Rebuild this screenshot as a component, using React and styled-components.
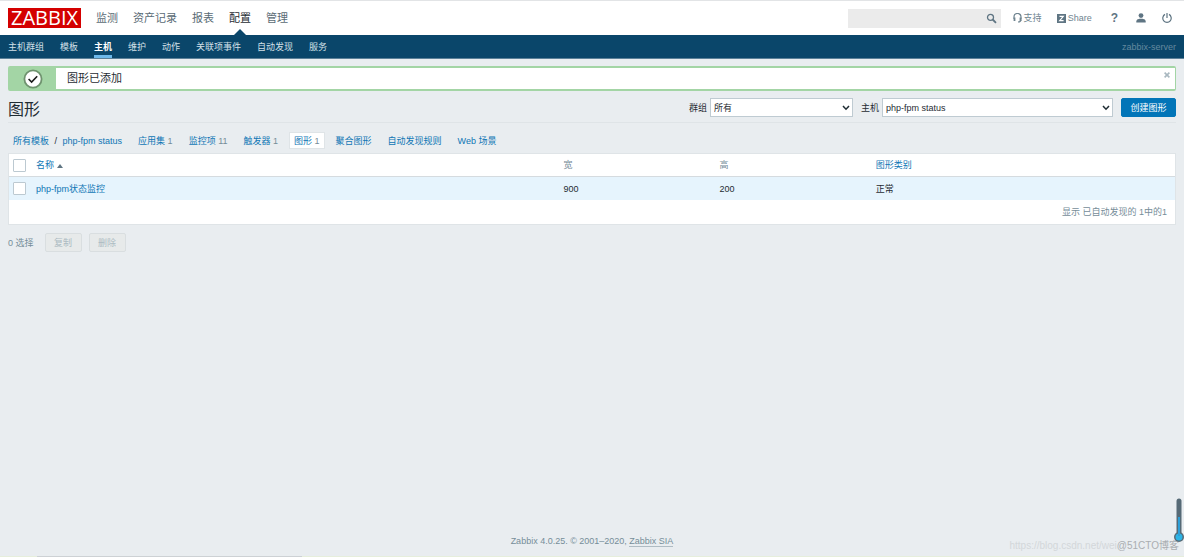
import React from 'react';
import styled, { createGlobalStyle } from 'styled-components';

const GlobalStyle = createGlobalStyle`
    * {
        box-sizing: border-box;
    }

    body {
        margin: 0;
        background: #E9EDF0;
        color: #1F2C33;
        font-family: "Liberation Sans", Arial, "Noto Sans CJK SC", sans-serif;
        font-size: 9px;
        line-height: 14px;
    }

    button, input, select {
        font: inherit;
        color: inherit;
        margin: 0;
    }

    a {
        color: #0F76B5;
        text-decoration: none;
    }
`;

const Page = styled.div`
    position: relative;
    display: flex;
    flex-direction: column;
    min-height: 100vh;
    border-bottom: 1px solid #E6EEDC;
`;

const TopBar = styled.header`
    display: flex;
    align-items: center;
    height: 35px;
    padding: 0 8px;
    background: #FFFFFF;
    border-top: 1px solid #E2E4E6;
`;

const Logo = styled.a`
    display: flex;
    align-items: center;
    justify-content: center;
    width: 73px;
    height: 20px;
    margin-right: 15px;
    background: #D40000;
    color: #FFFFFF;
    font-family: "Open Sans", sans-serif;
    font-size: 20px;
    font-weight: 500;
    line-height: 18px;
`;

const MainMenu = styled.nav`
    display: flex;
    gap: 15px;
    height: 100%;
`;

const MainLink = styled.a`
    position: relative;
    display: flex;
    align-items: center;
    color: ${({ $active }) => ($active ? '#1F2C33' : '#5A6B75')};
    font-size: 11px;

    &::after {
        content: "";
        display: ${({ $active }) => ($active ? 'block' : 'none')};
        position: absolute;
        bottom: 0;
        left: calc(50% - 6px);
        border: 6px solid transparent;
        border-top: none;
        border-bottom-color: #0A466A;
    }
`;

const Tools = styled.div`
    display: flex;
    align-items: center;
    margin-left: auto;
    color: #5F7583;
`;

const Search = styled.form`
    display: flex;
    align-items: center;
    width: 153px;
    height: 19px;
    margin-right: 12px;
    background: #EBEBEB;
`;

const SearchInput = styled.input`
    flex: 1;
    min-width: 0;
    height: 100%;
    padding: 0 4px;
    border: none;
    background: none;
`;

const IconButton = styled.button`
    display: flex;
    align-items: center;
    padding: 0 4px;
    border: none;
    background: none;
    color: #5F7583;
`;

const ToolLink = styled.a`
    display: flex;
    align-items: center;
    gap: 2px;
    margin-right: ${({ $gap }) => $gap || 0}px;
    color: #6F8490;
`;

const HelpLink = styled(ToolLink)`
    color: #5F7583;
    font-size: 12px;
    font-weight: 700;
`;

const SubMenu = styled.nav`
    display: flex;
    align-items: flex-end;
    gap: 16px;
    height: 24px;
    padding: 0 8px;
    background: #0A466A;
    border-bottom: 1px solid #5C8199;
`;

const SubLink = styled.a`
    height: 19px;
    padding: 1px 0;
    color: ${({ $active }) => ($active ? '#FFFFFF' : '#D3E0E8')};
    font-weight: ${({ $active }) => ($active ? 700 : 400)};
    border-bottom: 3px solid ${({ $active }) => ($active ? '#6DB8EA' : 'transparent')};
`;

const ServerName = styled.span`
    align-self: center;
    margin-left: auto;
    color: #64899F;
`;

const Content = styled.main`
    padding: 7px 8px 0;
`;

const Message = styled.div`
    display: flex;
    height: 25px;
    border: 1px solid #A3D5A5;
    border-top-width: 2px;
    border-bottom-width: 2px;
    border-radius: 2px;
    background: #FFFFFF;
    font-size: 11px;
`;

const MessageIcon = styled.div`
    display: flex;
    align-items: center;
    justify-content: center;
    width: 47px;
    background: #A3D5A5;
`;

const MessageText = styled.span`
    flex: 1;
    padding: 3px 0 0 11px;
`;

const CloseButton = styled.button`
    align-self: flex-start;
    padding: 4px 5px;
    border: none;
    background: none;
    line-height: 0;
`;

const TitleRow = styled.div`
    display: flex;
    align-items: center;
    height: 32px;
    padding-top: 2px;
    border-bottom: 1px solid #DFE4E7;
`;

const Title = styled.h1`
    flex: 1;
    margin: 0;
    padding-top: 4px;
    font-size: 16px;
    font-weight: 400;
`;

const Label = styled.label`
    margin-right: 3px;
`;

const SelectBox = styled.div`
    position: relative;
    width: ${({ $width }) => $width}px;
    margin-right: 8px;

    svg {
        position: absolute;
        top: 7px;
        right: 3px;
        pointer-events: none;
    }
`;

const Select = styled.select`
    display: block;
    width: 100%;
    height: 19px;
    padding: 0 3px;
    appearance: none;
    border: 1px solid #BFCBD2;
    border-radius: 0;
    background: #FFFFFF;
`;

const PrimaryButton = styled.button`
    min-width: 55px;
    height: 19px;
    padding: 0 8px;
    border: 1px solid #0275B8;
    border-radius: 2px;
    background: #0275B8;
    color: #FFFFFF;
`;

const Tabs = styled.nav`
    display: flex;
    align-items: center;
    gap: 6px;
    height: 30px;
    padding-top: 4px;
`;

const Tab = styled.span`
    height: 17px;
    padding: 1px 4px;
    border: 1px solid ${({ $active }) => ($active ? '#DFE4E7' : 'transparent')};
    background: ${({ $active }) => ($active ? '#FFFFFF' : 'transparent')};
    color: #768D99;
`;

const Slash = styled.span`
    padding: 0 3px;
    color: #1F2C33;
`;

const Table = styled.table`
    width: 100%;
    border: 1px solid #DFE4E7;
    border-collapse: separate;
    border-spacing: 0;
    background: #FFFFFF;
    table-layout: fixed;
`;

const Th = styled.th`
    width: ${({ $width }) => $width || 'auto'};
    height: 23px;
    padding: 0 4px;
    border-bottom: 1px solid #D5DBDF;
    color: #768D99;
    font-weight: 400;
    text-align: left;
`;

const Td = styled.td`
    height: 23px;
    padding: 0 4px;
    background: #E6F4FD;
`;

const Summary = styled.td`
    height: 24px;
    padding: 0 8px;
    color: #768D99;
    text-align: right;
`;

const SortArrow = styled.span`
    display: inline-block;
    margin-left: 3px;
    border: 3px solid transparent;
    border-top: none;
    border-bottom: 4px solid #5F7583;
`;

const Checkbox = styled.input`
    display: block;
    width: 13px;
    height: 13px;
    appearance: none;
    border: 1px solid #BCC9D1;
    border-radius: 1px;
    background: #FFFFFF;
`;

const Actions = styled.div`
    display: flex;
    align-items: center;
    gap: 7px;
    margin-top: 8px;
    color: #768D99;
`;

const Selected = styled.span`
    margin-right: 4px;
`;

const GreyButton = styled.button`
    min-width: 37px;
    height: 19px;
    padding: 0 8px;
    border: 1px solid #D9DEE0;
    border-radius: 2px;
    background: #E7EAEA;
    color: #ACBBC2;
`;

const Footer = styled.footer`
    margin-top: auto;
    padding-bottom: 8px;
    color: #768D99;
    text-align: center;

    a {
        color: inherit;
        border-bottom: 1px solid #AFBCC3;
    }
`;

const Watermark = styled.div`
    position: absolute;
    right: 5px;
    bottom: 3px;
    display: flex;
    color: #A9ADB0;
    font-size: 10px;
`;

const WatermarkUrl = styled.span`
    color: #D3D7DA;
`;

const Thermometer = styled.svg`
    position: absolute;
    right: 0;
    bottom: 13px;
`;

const ScrollHint = styled.div`
    position: absolute;
    bottom: -1px;
    left: 37px;
    width: 265px;
    height: 1px;
    background: #CDD1D4;
`;

const SearchIcon = () => (
    <svg width="11" height="11" viewBox="0 0 11 11" fill="none" stroke="currentColor">
        <circle cx="4.5" cy="4.3" r="3" strokeWidth="1.3" />
        <path d="M6.7 6.5 L10 9.8" strokeWidth="1.8" />
    </svg>
);

const HeadsetIcon = () => (
    <svg width="9" height="10" viewBox="0 0 9 10" fill="none" stroke="currentColor">
        <path d="M1 6 V4 A3.5 3.5 0 0 1 8 4 V6 M8 6.5 Q8 9 5 9" strokeWidth="1.2" />
        <path d="M1.5 4.5 V8 M7.5 4.5 V8" strokeWidth="1.8" />
    </svg>
);

const ShareIcon = () => (
    <svg width="9" height="9" viewBox="0 0 9 9">
        <path d="M0 0 H9 V9 H0 Z" fill="#5F7583" />
        <path d="M2.5 2.3 H6.3 L2.7 6.7 H6.6" fill="none" stroke="#FFFFFF" strokeWidth="1.2" />
    </svg>
);

const UserIcon = () => (
    <svg width="10" height="10" viewBox="0 0 10 10" fill="#5F7583">
        <circle cx="5" cy="2.6" r="2.4" />
        <path d="M0.3 9.5 V8 Q0.5 6.3 3.5 5.8 H6.5 Q9.5 6.3 9.7 8 V9.5 Z" />
    </svg>
);

const PowerIcon = () => (
    <svg width="10" height="10" viewBox="0 0 10 10" fill="none" stroke="#5F7583" strokeWidth="1.2">
        <path d="M3 1.4 A4.2 4.2 0 1 0 7 1.4 M5 0 V5" />
    </svg>
);

const CheckIcon = () => (
    <svg width="20" height="20" viewBox="0 0 20 20" fill="none">
        <circle cx="10" cy="10" r="8.6" fill="#FFFFFF" stroke="#6F936F" strokeWidth="1.8" />
        <path d="M5.6 10 L8.6 13 L14.2 7.2" stroke="#1B1B1B" strokeWidth="1.6" />
    </svg>
);

const CloseIcon = () => (
    <svg width="6" height="6" viewBox="0 0 6 6" stroke="#A9B8C0" strokeWidth="1.6">
        <path d="M0.6 0.6 L5.4 5.4 M5.4 0.6 L0.6 5.4" />
    </svg>
);

const Chevron = () => (
    <svg width="8" height="6" viewBox="0 0 8 6" fill="none" stroke="#1F2C33" strokeWidth="1.5">
        <path d="M1 1 L4 4.2 L7 1" />
    </svg>
);

const mainMenu = ['监测', '资产记录', '报表', '配置', '管理'];
const subMenu = ['主机群组', '模板', '主机', '维护', '动作', '关联项事件', '自动发现', '服务'];
const tabs = [
    { name: '应用集', count: 1 },
    { name: '监控项', count: 11 },
    { name: '触发器', count: 1 },
    { name: '图形', count: 1 },
    { name: '聚合图形' },
    { name: '自动发现规则' },
    { name: 'Web 场景' },
];

const App = () => {
    return (
        <Page>
            <GlobalStyle />
            <TopBar>
                <Logo href="#">ZABBIX</Logo>
                <MainMenu>
                    {mainMenu.map((item) => (
                        <MainLink key={item} href="#" $active={item === '配置'}>{item}</MainLink>
                    ))}
                </MainMenu>
                <Tools>
                    <Search>
                        <SearchInput type="text" aria-label="搜索" />
                        <IconButton type="button" aria-label="搜索"><SearchIcon /></IconButton>
                    </Search>
                    <ToolLink href="#" $gap={15}><HeadsetIcon />支持</ToolLink>
                    <ToolLink href="#" $gap={19}><ShareIcon />Share</ToolLink>
                    <HelpLink href="#" $gap={18}>?</HelpLink>
                    <ToolLink href="#" $gap={16} aria-label="用户"><UserIcon /></ToolLink>
                    <ToolLink href="#" $gap={4} aria-label="退出"><PowerIcon /></ToolLink>
                </Tools>
            </TopBar>
            <SubMenu>
                {subMenu.map((item) => (
                    <SubLink key={item} href="#" $active={item === '主机'}>{item}</SubLink>
                ))}
                <ServerName>zabbix-server</ServerName>
            </SubMenu>
            <Content>
                <Message>
                    <MessageIcon><CheckIcon /></MessageIcon>
                    <MessageText>图形已添加</MessageText>
                    <CloseButton type="button" aria-label="关闭"><CloseIcon /></CloseButton>
                </Message>
                <TitleRow>
                    <Title>图形</Title>
                    <Label htmlFor="group">群组</Label>
                    <SelectBox $width={143}>
                        <Select id="group"><option>所有</option></Select>
                        <Chevron />
                    </SelectBox>
                    <Label htmlFor="host">主机</Label>
                    <SelectBox $width={231}>
                        <Select id="host"><option>php-fpm status</option></Select>
                        <Chevron />
                    </SelectBox>
                    <PrimaryButton type="button">创建图形</PrimaryButton>
                </TitleRow>
                <Tabs>
                    <Tab>
                        <a href="#">所有模板</a> <Slash>/</Slash> <a href="#">php-fpm status</a>
                    </Tab>
                    {tabs.map(({ name, count }) => (
                        <Tab key={name} $active={name === '图形'}>
                            <a href="#">{name}</a>{count && ` ${count}`}
                        </Tab>
                    ))}
                </Tabs>
                <Table>
                    <thead>
                        <tr>
                            <Th $width="23px"><Checkbox type="checkbox" aria-label="全选" /></Th>
                            <Th><a href="#">名称<SortArrow /></a></Th>
                            <Th $width="13.4%">宽</Th>
                            <Th $width="13.4%">高</Th>
                            <Th $width="26%"><a href="#">图形类别</a></Th>
                        </tr>
                    </thead>
                    <tbody>
                        <tr>
                            <Td><Checkbox type="checkbox" aria-label="php-fpm状态监控" /></Td>
                            <Td><a href="#">php-fpm状态监控</a></Td>
                            <Td>900</Td>
                            <Td>200</Td>
                            <Td>正常</Td>
                        </tr>
                        <tr>
                            <Summary colSpan={5}>显示 已自动发现的 1中的1</Summary>
                        </tr>
                    </tbody>
                </Table>
                <Actions>
                    <Selected>0 选择</Selected>
                    <GreyButton type="button" disabled>复制</GreyButton>
                    <GreyButton type="button" disabled>删除</GreyButton>
                </Actions>
            </Content>
            <Footer>
                Zabbix 4.0.25. © 2001–2020, <a href="#">Zabbix SIA</a>
            </Footer>
            <Watermark>
                <WatermarkUrl>https://blog.csdn.net/wei</WatermarkUrl>
                <span>@51CTO博客</span>
            </Watermark>
            <Thermometer width="10" height="45" viewBox="0 0 10 45">
                <path d="M2.5 3 Q2.5 0.5 5 0.5 Q7.5 0.5 7.5 3 V35 H2.5 Z" fill="#566A76" />
                <circle cx="5" cy="39" r="5" fill="#566A76" />
                <circle cx="5" cy="39" r="3.5" fill="#2DB4E6" />
                <path d="M5 19 V38" stroke="#2D9FD8" strokeWidth="2" />
            </Thermometer>
            <ScrollHint />
        </Page>
    );
};

export default App;
